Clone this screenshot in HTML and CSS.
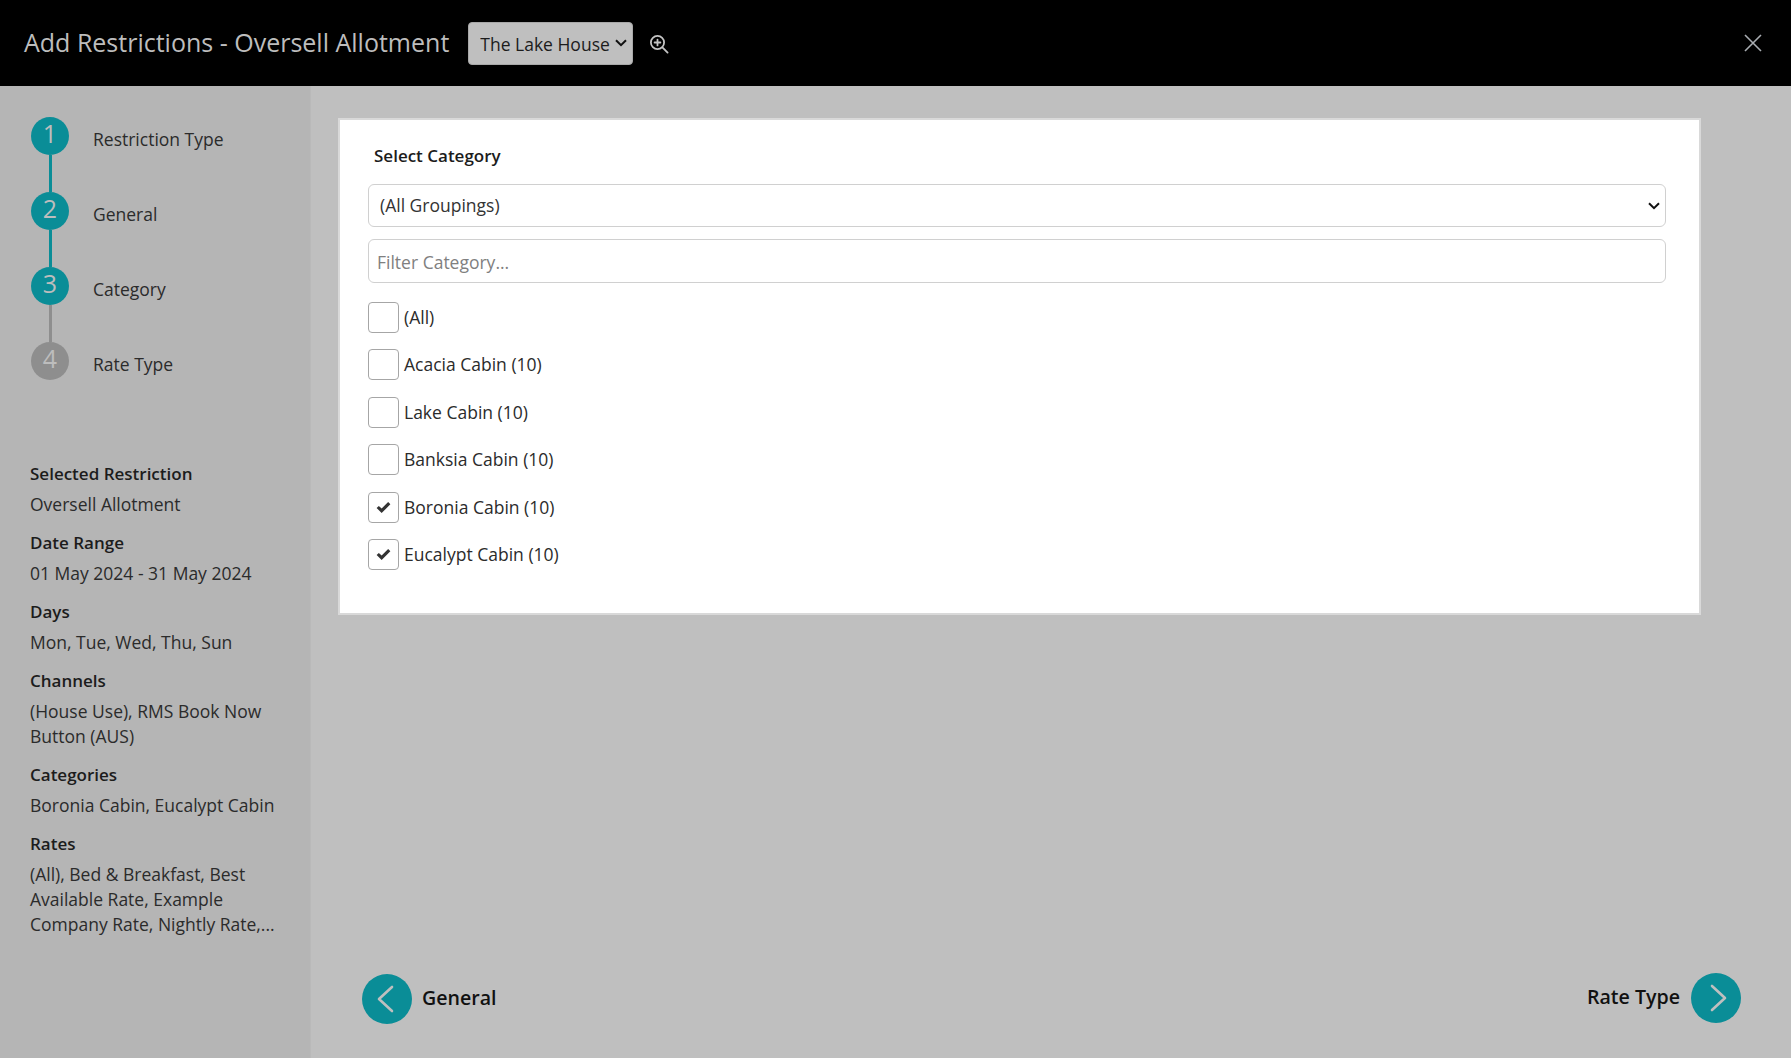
FILE: index.html
```html
<!DOCTYPE html>
<html lang="en">
<head>
    <meta charset="UTF-8">
    <meta name="viewport" content="width=device-width, initial-scale=1.0">
    <title>Add Restrictions - Oversell Allotment</title>
    <link rel="stylesheet" href="styles.css">
</head>
<body>
    <header class="top-bar">
        <h1 class="top-title">Add Restrictions - Oversell Allotment</h1>
        <div class="select-wrap property-wrap">
            <select class="property-select">
                <option>The Lake House</option>
            </select>
            <svg class="chevron" viewBox="0 0 12 8" width="12" height="8" fill="none" stroke="#111" stroke-width="2"><path d="M1 1.2L6 6.2L11 1.2"/></svg>
        </div>
        <svg class="zoom-icon" viewBox="0 0 20 20" width="20" height="20" fill="none" stroke="#c4c4c4" stroke-width="1.8" stroke-linecap="round">
            <circle cx="8.5" cy="8.5" r="6.6"/>
            <path d="M13.4 13.4L18.6 18.6M8.5 5.6v5.8M5.6 8.5h5.8"/>
        </svg>
        <svg class="close-icon" viewBox="0 0 18 18" width="18" height="18" fill="none" stroke="#a9adb2" stroke-width="1.6">
            <path d="M1 1L17 17M17 1L1 17"/>
        </svg>
    </header>

    <div class="layout">
        <aside class="sidebar">
            <ol class="steps">
                <li class="step done"><span class="step-num">1</span><span class="step-label">Restriction Type</span></li>
                <li class="step done"><span class="step-num">2</span><span class="step-label">General</span></li>
                <li class="step current"><span class="step-num">3</span><span class="step-label">Category</span></li>
                <li class="step"><span class="step-num">4</span><span class="step-label">Rate Type</span></li>
            </ol>

            <div class="summary">
                <h3>Selected Restriction</h3>
                <p>Oversell Allotment</p>
                <h3>Date Range</h3>
                <p>01 May 2024 - 31 May 2024</p>
                <h3>Days</h3>
                <p>Mon, Tue, Wed, Thu, Sun</p>
                <h3>Channels</h3>
                <p>(House Use), RMS Book Now Button (AUS)</p>
                <h3>Categories</h3>
                <p>Boronia Cabin, Eucalypt Cabin</p>
                <h3>Rates</h3>
                <p>(All), Bed &amp; Breakfast, Best Available Rate, Example Company Rate, Nightly Rate,...</p>
            </div>
        </aside>

        <main class="content">
            <section class="card">
                <h2 class="card-title">Select Category</h2>
                <div class="select-wrap">
                    <select class="field field-select">
                        <option>(All Groupings)</option>
                    </select>
                    <svg class="chevron" viewBox="0 0 12 8" width="12" height="8" fill="none" stroke="#111" stroke-width="2"><path d="M1 1.2L6 6.2L11 1.2"/></svg>
                </div>
                <input class="field field-input" type="text" placeholder="Filter Category...">
                <div class="check-list">
                    <label class="check-row"><span class="check-box"></span>(All)</label>
                    <label class="check-row"><span class="check-box"></span>Acacia Cabin (10)</label>
                    <label class="check-row"><span class="check-box"></span>Lake Cabin (10)</label>
                    <label class="check-row"><span class="check-box"></span>Banksia Cabin (10)</label>
                    <label class="check-row"><span class="check-box"><svg viewBox="0 0 16 14" width="15" height="13" fill="#333"><path d="M0.6 7.6L3 5.3L6 8.2L13 1.2L15.4 3.6L6 13Z"/></svg></span>Boronia Cabin (10)</label>
                    <label class="check-row"><span class="check-box"><svg viewBox="0 0 16 14" width="15" height="13" fill="#333"><path d="M0.6 7.6L3 5.3L6 8.2L13 1.2L15.4 3.6L6 13Z"/></svg></span>Eucalypt Cabin (10)</label>
                </div>
            </section>

            <nav class="wizard-nav">
                <a class="nav-link">
                    <span class="nav-circle">
                        <svg viewBox="0 0 50 50" width="50" height="50" fill="none" stroke="#bfbfbf" stroke-width="2.6" stroke-linecap="round" stroke-linejoin="round"><path d="M30 13L17 25L30 37"/></svg>
                    </span>
                    <span class="nav-text">General</span>
                </a>
                <a class="nav-link nav-next">
                    <span class="nav-text">Rate Type</span>
                    <span class="nav-circle">
                        <svg viewBox="0 0 50 50" width="50" height="50" fill="none" stroke="#bfbfbf" stroke-width="2.6" stroke-linecap="round" stroke-linejoin="round"><path d="M21 13L34 25L21 37"/></svg>
                    </span>
                </a>
            </nav>
        </main>
    </div>
</body>
</html>
```

FILE: styles.css
```css
* {
    box-sizing: border-box;
}

html, body {
    height: 100%;
}

body {
    margin: 0;
    font-family: "Open Sans", Arial, sans-serif;
    font-size: 17.5px;
    line-height: 25px;
    color: #2b2b2b;
    background-color: #bfbfbf;
    display: flex;
    flex-direction: column;
    overflow: hidden;
}

.top-bar {
    height: 86px;
    flex-shrink: 0;
    background-color: #000;
    display: flex;
    align-items: center;
    padding: 0 24px;
}

.top-title {
    margin: -2px 0 0;
    font-size: 25px;
    font-weight: 400;
    color: #bdbdbd;
}

.select-wrap {
    position: relative;
}

.chevron {
    position: absolute;
    right: 6px;
    top: 50%;
    margin-top: -4px;
    pointer-events: none;
}

.property-wrap {
    margin-left: 19px;
}

.property-select {
    display: block;
    width: 165px;
    height: 43px;
    padding: 2px 0 0 11px;
    appearance: none;
    font-family: inherit;
    font-size: 17.5px;
    color: #1c1c1c;
    background-color: #bfbfbf;
    border: 1px solid #a8a8a8;
    border-radius: 4px;
}

.zoom-icon {
    margin: 1px 0 0 16px;
}

.close-icon {
    margin-left: auto;
    margin-right: 5px;
}

.layout {
    flex: 1;
    display: flex;
    min-height: 0;
}

.sidebar {
    width: 311px;
    flex-shrink: 0;
    background-color: #b5b5b5;
    border-right: 1px solid #b9b9b9;
    padding: 31px 30px 0;
}

.steps {
    list-style: none;
    margin: 0;
    padding: 0;
}

.step {
    position: relative;
    display: flex;
    height: 75px;
    color: #2b2b2b;
}

.step-num {
    width: 38px;
    height: 38px;
    margin-left: 1px;
    flex-shrink: 0;
    border-radius: 50%;
    background-color: #0a8d97;
    color: #bdbdbd;
    font-size: 25px;
    line-height: 33px;
    text-align: center;
}

.step-label {
    margin-left: 24px;
    line-height: 45px;
}

.step::after {
    content: "";
    position: absolute;
    left: 19px;
    top: 38px;
    width: 3px;
    height: 37px;
    background-color: #0a8d97;
}

.step.current::after {
    background-color: #8e8e8e;
}

.step:last-child::after {
    display: none;
}

.step:last-child .step-num {
    background-color: #8e8e8e;
}

.summary {
    margin-top: 43.5px;
}

.summary h3 {
    margin: 0 0 6.5px;
    font-size: 17px;
    font-weight: 600;
    color: #1c1c1c;
}

.summary p {
    margin: 0 0 12.5px;
}

.content {
    flex: 1;
    display: flex;
    flex-direction: column;
    padding: 32px 50px 34px 27px;
}

.card {
    width: 1363px;
    height: 497px;
    background-color: #fff;
    border: 2px solid #d9d9d9;
    padding: 24px 33px 0 28px;
}

.card-title {
    margin: 0 0 16px;
    padding-left: 6px;
    font-size: 17px;
    line-height: 24px;
    font-weight: 600;
    color: #1c1c1c;
}

.field {
    display: block;
    width: 100%;
    font-family: inherit;
    font-size: 17.5px;
    color: #333;
    background-color: #fff;
    border: 1px solid #d0d0d0;
    border-radius: 6px;
}

.field-select {
    height: 43px;
    padding: 0 11px 2px;
    appearance: none;
}

.field-input {
    height: 44px;
    margin-top: 12px;
    padding: 1px 8px 0;
}

.field-input::placeholder {
    color: #808080;
}

.check-list {
    margin-top: 19px;
    display: flex;
    flex-direction: column;
    gap: 16.4px;
}

.check-row {
    display: flex;
    align-items: center;
    gap: 5px;
    height: 31px;
}

.check-box {
    width: 31px;
    height: 31px;
    flex-shrink: 0;
    border: 1px solid #a6a6a6;
    border-radius: 4px;
    display: flex;
    align-items: center;
    justify-content: center;
}

.wizard-nav {
    margin-top: auto;
    display: flex;
    justify-content: space-between;
    align-items: flex-end;
    padding-left: 24px;
}

.nav-link {
    display: flex;
    align-items: center;
    gap: 10px;
    font-size: 19.6px;
    line-height: 23px;
    font-weight: 600;
    color: #111;
}

.nav-text {
    margin-top: -3px;
}

.nav-next {
    gap: 11px;
    margin-bottom: 1px;
}

.nav-circle {
    width: 50px;
    height: 50px;
    border-radius: 50%;
    background-color: #0a8d97;
    display: block;
}

.nav-circle svg {
    display: block;
}
```
